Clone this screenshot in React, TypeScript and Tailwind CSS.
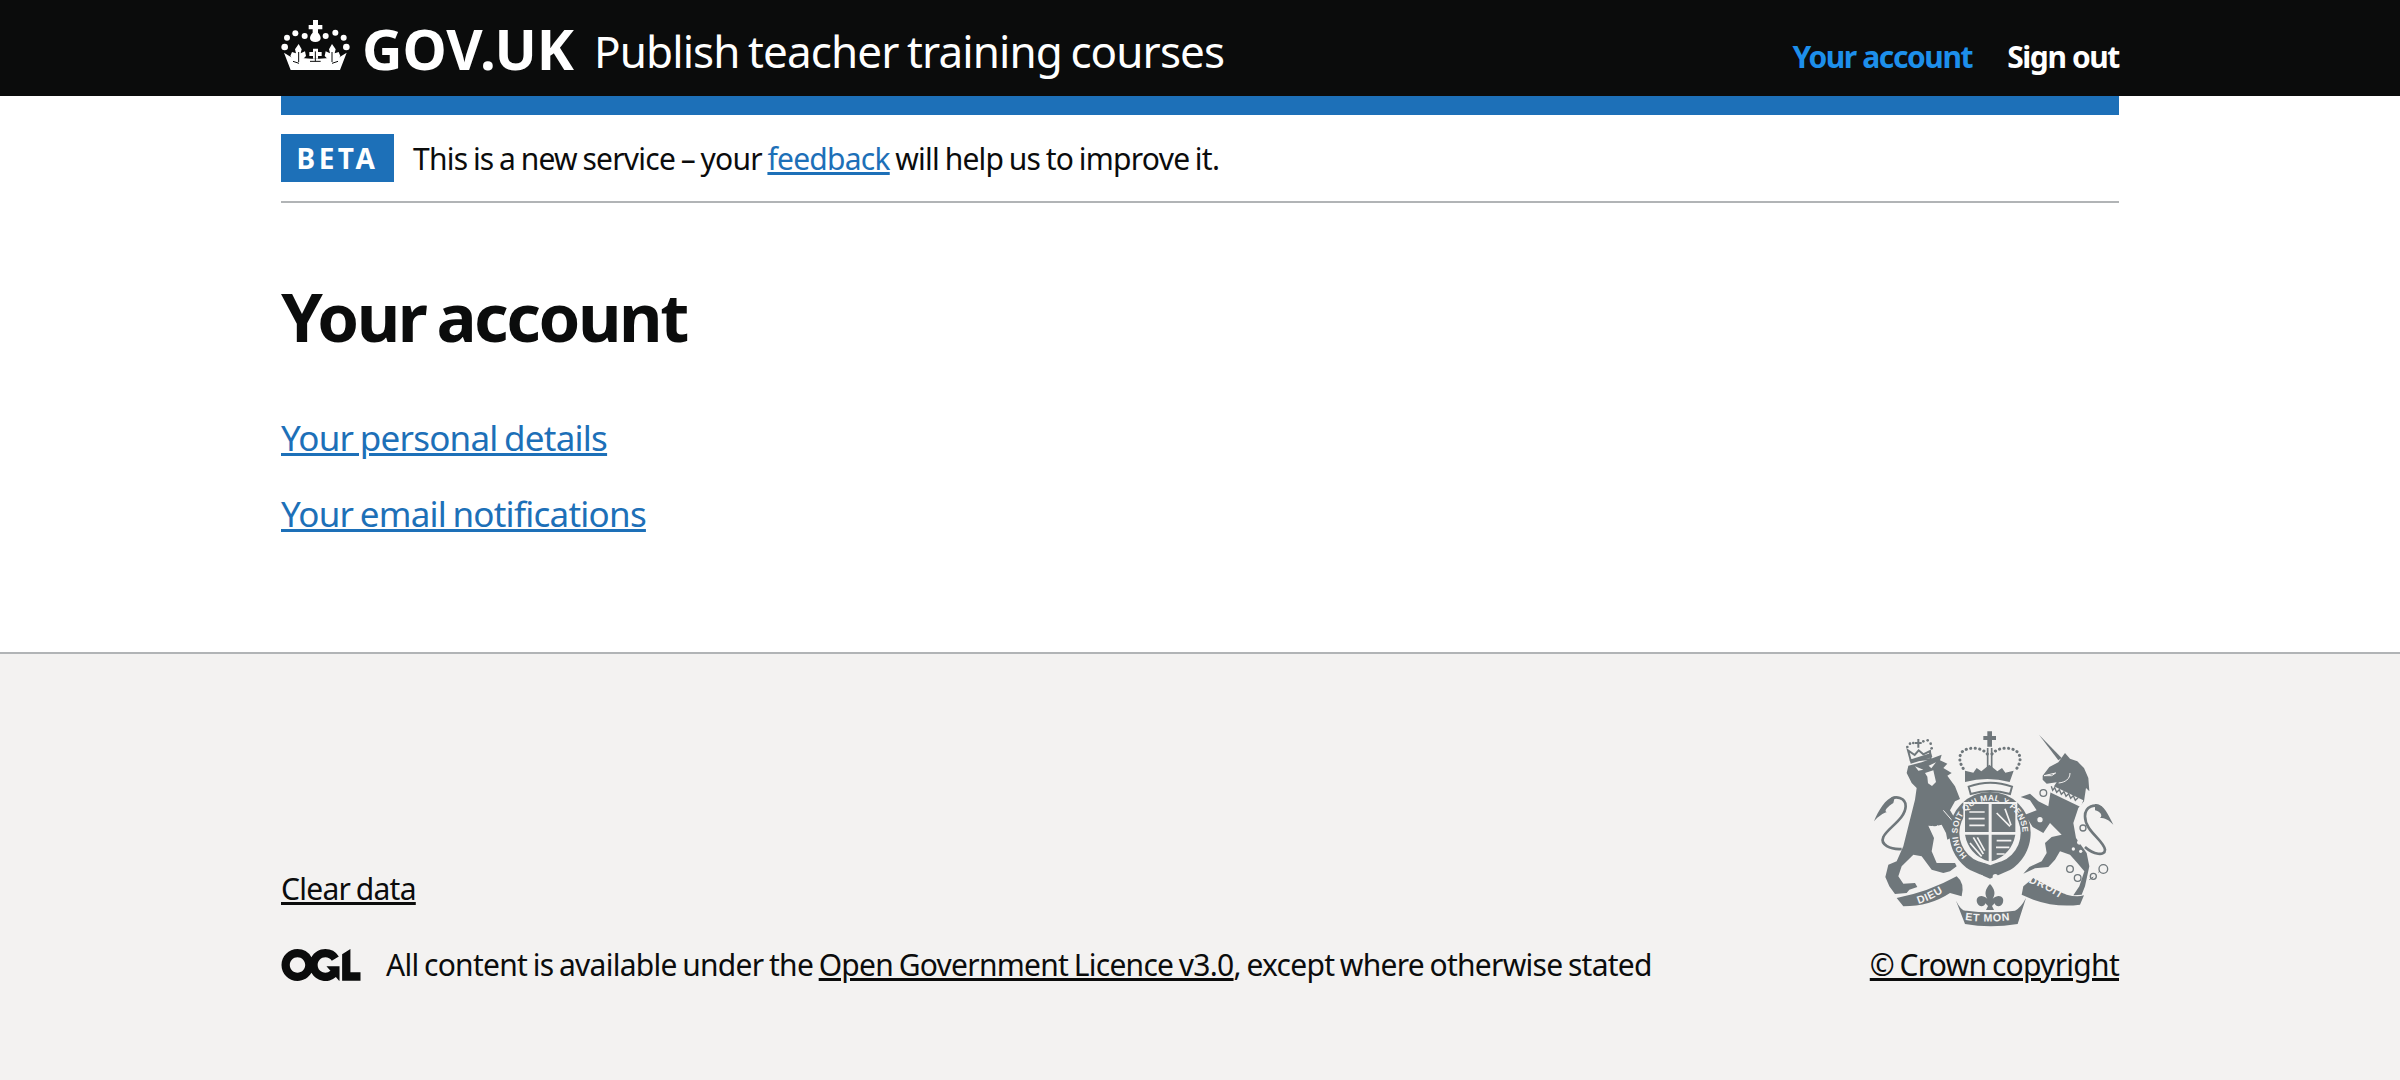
const font = { fontFamily: '"Noto Sans", Arial, sans-serif' }

function Crown() {
  const dots = [
    [20, 93, 10], [27, 65, 9], [52, 52, 9], [80, 60, 9], [143, 60, 9], [172, 50, 9], [197, 65, 9], [205, 93, 10],
  ]
  return (
    <svg width="76" height="60" viewBox="0 0 228 180" fill="#fff" className="shrink-0 -ml-[3px] -mt-[4px]">
      {dots.map(([x, y, r]) => (
        <circle key={`${x}-${y}`} cx={x} cy={y} r={r} />
      ))}
      <path d="M105 12h15v15h13v13h-13v10c6 6 8 12 8 17 0 7-7 11-16 11s-16-4-16-11c0-5 2-11 8-17V40H92V27h13z" />
      <path d="M62 84l9 16-3 12 13-6 3 14-8 8H43l-6-8 5-12 12 4-3-12z" />
      <path d="M162 84l-9 16 3 12-13-6-3 14 8 8h33l6-8-5-12-12 4 3-12z" />
      <path d="M105 98h15v10h11v12h-11v8h-15v-8H94v-12h11z" />
      <path d="M18 110l22 14 60 4h24l60-4 22-14-20 52H38z" />
      <path d="M62 108v30M112 106v30M162 108v30M45 136l18 6M180 136l-18 6M96 136h32" stroke="#0b0c0c" strokeWidth="3" fill="none" />
    </svg>
  )
}

function Ogl() {
  return (
    <svg width="80" height="32" viewBox="0 0 483.2 195.7" fill="#0b0c0c" className="shrink-0">
      <path d="M421.5 142.8V.1l-50.7 32.3v161.1h112.4v-50.7zm-122.3-9.6A47.12 47.12 0 0 1 221 97.8c0-26 21.1-47.1 47.1-47.1 16.7 0 31.4 8.7 39.7 21.8l42.7-27.2A97.63 97.63 0 0 0 268.1 0c-36.5 0-68.3 20.1-85.1 49.7A98 98 0 0 0 97.8 0C43.9 0 0 43.9 0 97.8s43.9 97.8 97.8 97.8c36.5 0 68.3-20.1 85.1-49.7a97.76 97.76 0 0 0 149.6 25.4l19.4 22.2h3v-87.8h-80l24.3 27.5zM97.8 145c-26 0-47.1-21.1-47.1-47.1s21.1-47.1 47.1-47.1 47.2 21 47.2 47S123.8 145 97.8 145" />
    </svg>
  )
}

// royal arms, drawn on a 840x660 grid
function Crest() {
  const c = '#6f777b'
  const bg = '#f3f2f1'
  const motto = { fontFamily: '"Liberation Sans", sans-serif', fontSize: 32, fontWeight: 700, fill: bg, letterSpacing: 2, wordSpacing: 0 }
  return (
    <svg width="280" height="220" viewBox="0 0 840 660" fill={c} className="-mr-[11px]">
      <defs>
        <path id="garterRing" d="M351.4 413.6 A97 97 0 1 1 488.6 413.6" />
        <path id="ribbonLeft" d="M205 558 Q260 540 300 508" />
        <path id="ribbonMid" d="M345 606 Q420 616 500 604" />
        <path id="ribbonRight" d="M535 494 Q590 510 650 556" />
      </defs>

      {/* lion */}
      <g transform="translate(30 15)">
        <path d="M145 128L185 118L245 95L240 112L262 122L250 135L275 150L262 158L285 190L300 228L285 235L270 262L305 320L290 335L262 350L258 330L245 305L225 310L205 308L222 345L215 385L230 420L285 420L290 430L270 445L250 450L215 440L185 400L160 395L125 430L115 460L130 482L165 480L172 492L148 500L140 510L105 513L88 490L76 462L85 425L110 415L130 370L145 310L165 230L170 195L155 180L140 150Z" />
        <path d="M125 378C90 380 60 365 70 342C82 315 135 290 137 250C138 225 105 215 90 232" fill="none" stroke={c} strokeWidth="8" />
        <path d="M105 220C75 225 55 265 42 295C55 280 70 270 80 268C70 262 85 250 100 240Z" />
        <path d="M165 130l25 10-15 3zM228 118l-22 10 8 8z" fill={bg} />
        <path d="M195 150l25-8 8 35-12 12-12-8-2-20z" fill={bg} />
        <path d="M250 262l50 58" stroke={bg} strokeWidth="3" fill="none" />
        <path d="M208 312l10-4 8 14 6-16 10 12 8 18-8 14-14 0-10-24z" fill={bg} />
        {/* lion crown */}
        <path d="M152 112l-8-30 20 14 12-14 14 12 20-10 2 24z" fill="none" stroke={c} strokeWidth="6" />
        <path d="M152 122l-3-12 64-20 4 12z" />
        <path d="M175 48v26M165 60h20" stroke={c} strokeWidth="6" />
        {[[142, 72], [150, 62], [160, 60], [190, 55], [203, 52], [212, 62], [215, 76]].map(([x, y]) => (
          <circle key={x} cx={x} cy={y} r="4" />
        ))}
      </g>

      {/* unicorn */}
      <g transform="translate(420 15)">
        <path d="M147 35L215 105L205 112Z" />
        <path d="M158 158L178 132L205 118L225 90L240 107L262 115L282 135L295 165L298 205L288 195L282 235L265 255L250 300L258 345L290 390L298 430L285 490L275 515L250 517L268 490L283 445L262 420L240 395L210 385L195 410L175 432L135 436L100 452L118 432L155 415L170 390L165 360L185 342L215 335L180 300L160 330L128 312L105 275L140 262L120 232L92 222L120 212L145 235L175 250L182 205L200 178L170 182L158 170Z" />
        <path d="M162 158l35-8-12 8zM240 150c0 18-14 28-34 30" stroke={bg} strokeWidth="3" fill="none" />
        <path d="M182 185L280 232L272 252L180 208Z" fill={bg} />
        <path d="M184 190l4 12 6-8 6 14 8-8 6 14 8-8 6 14 8-8 6 14 8-8 6 14 8-8" stroke={c} strokeWidth="4" fill="none" />
        <path d="M285 372C310 395 345 400 345 380C340 350 285 325 285 280C285 250 315 240 335 255" fill="none" stroke={c} strokeWidth="8" />
        <path d="M315 243C340 240 355 275 370 305C355 290 345 285 330 285C340 278 330 265 315 262Z" />
        <circle cx="279" cy="315" r="9" fill={bg} stroke={c} strokeWidth="4" />
        <circle cx="150" cy="290" r="10" fill={bg} stroke={c} strokeWidth="4" />
        {[[268, 358, 7], [250, 378, 5], [272, 385, 5]].map(([x, y, r]) => (
          <circle key={x} cx={x} cy={y} r={r} fill={bg} />
        ))}
        {[[160, 210, 10], [240, 438, 10], [263, 465, 10], [310, 460, 9], [340, 438, 13]].map(([x, y, r]) => (
          <circle key={x} cx={x} cy={y} r={r} fill="none" stroke={c} strokeWidth="4" />
        ))}
        <path d="M298 470l12-8M325 448l5-4" stroke={c} strokeWidth="3" />
      </g>

      {/* crown */}
      <path d="M412 40h14v14h12v12h-12v20h-14V66h-12V54h12z" />
      <path d="M413 90v62M425 90v62" stroke={c} strokeWidth="5" />
      <path d="M412 108c-18-22-60-22-76-6-12 16-6 34 4 50M426 108c18-22 60-22 76-6 14 16 8 34-2 50" fill="none" stroke={c} strokeWidth="9" strokeLinecap="round" strokeDasharray="0.5 13" />
      <path d="M345 158l25 6 10-14 14 10 24-20 24 20 14-10 10 14 25-6-12 34q-67-18-134 0z" />
      <path d="M356 206q65-24 130 0l-6 22q-60-18-118 0z" fill={bg} stroke={c} strokeWidth="6" />

      {/* garter and shield */}
      <path d="M420 222a122 122 0 0 1 122 122c0 50-28 92-62 112l-60 26-60-26c-34-20-62-62-62-112a122 122 0 0 1 122-122z" />
      <circle cx="420" cy="345" r="92" fill={bg} />
      <path d="M340 252h162v102q-6 60-81 88-75-28-81-88z" fill={bg} />
      <path d="M345 258h71v84h-71zM425 258h71v84h-71zM345 350h71v80q-60-20-71-80zM425 350h71q-11 60-71 80z" />
      <path d="M358 282h46M356 302h48M358 322h46M440 285l40 40M465 272l18 50M370 358l30 50M360 375l35 40M382 358l22 40M440 368h44M438 388h40M440 408h24" stroke={bg} strokeWidth="5" fill="none" />
      <circle cx="392" cy="478" r="8" fill={bg} />
      <circle cx="436" cy="476" r="8" fill={bg} />
      <text fontFamily='"Liberation Sans", sans-serif' fontSize="25" fontWeight="700" fill={bg} letterSpacing="1" wordSpacing="0">
        <textPath href="#garterRing">HONI SOIT QUI MAL Y PENSE</textPath>
      </text>

      {/* fleur and motto ribbon */}
      <path d="M420 498c14 15 18 30 8 44 18-16 38-6 30 14-6 14-22 10-24 0l-8 8 6 12h-24l6-12-8-8c-2 10-18 14-24 0-8-20 12-30 30-14-10-14-6-29 8-44z" />
      <path d="M140 540Q235 522 320 475Q345 495 335 535L300 525Q240 565 160 565Z" />
      <path d="M318 548Q335 582 350 578Q420 588 495 578Q512 570 528 540L503 618Q420 632 345 618Z" />
      <path d="M520 505L550 480Q600 510 650 530Q680 538 702 532L690 560Q620 570 550 545L515 530Z" />
      <text {...motto}>
        <textPath href="#ribbonLeft">DIEU</textPath>
      </text>
      <text {...motto}>
        <textPath href="#ribbonMid">ET MON</textPath>
      </text>
      <text {...motto}>
        <textPath href="#ribbonRight">DROIT</textPath>
      </text>
    </svg>
  )
}

export default function App() {
  return (
    <div style={font} className="min-h-[1080px] flex flex-col bg-white text-[#0b0c0c]">
      <header className="h-[96px] bg-[#0b0c0c] shrink-0">
        <div className="w-[1838px] h-full mx-auto flex items-center justify-between">
          <div className="flex items-center">
            <Crown />
            <span className="ml-[8px] text-[56px] font-bold text-white leading-none">GOV.UK</span>
            <span className="ml-[20px] pt-[6px] text-[44px] text-white leading-none tracking-[-0.9px] [word-spacing:-2px]">Publish teacher training courses</span>
          </div>
          <nav className="flex gap-[35px] text-[30px] font-bold pt-[16px] tracking-[-1.4px] [word-spacing:0px]">
            <a className="text-[#1d8feb]">Your account</a>
            <a className="text-white">Sign out</a>
          </nav>
        </div>
      </header>

      <main className="w-[1838px] mx-auto shrink-0">
        <div className="h-[19px] bg-[#1d70b8]" />
        <div className="h-[88px] flex items-center border-b-2 border-[#b1b4b6]">
          <strong className="w-[113px] h-[48px] flex items-center justify-center bg-[#1d70b8] text-white text-[28px] font-bold tracking-[3.5px]">BETA</strong>
          <p className="ml-[19px] text-[30px] tracking-[-0.75px] [word-spacing:-1.5px]">
            This is a new service – your <a className="text-[#1d70b8] underline">feedback</a> will help us to improve it.
          </p>
        </div>
        <h1 className="mt-[68px] text-[67px] leading-[90px] font-bold tracking-[-2.4px] [word-spacing:-4px]">Your account</h1>
        <ul className="mt-[52px] text-[35px] leading-[50px] text-[#1d70b8] underline flex flex-col gap-[26px] tracking-[-0.75px] [word-spacing:-2px]">
          <li>Your personal details</li>
          <li>Your email notifications</li>
        </ul>
      </main>

      <footer className="mt-[113px] flex-1 bg-[#f3f2f1] border-t-2 border-[#b1b4b6]">
        <div className="w-[1838px] mx-auto pt-[64px] flex justify-between items-end text-[30px] tracking-[-0.73px] [word-spacing:-1.5px]">
          <div>
            <a className="underline">Clear data</a>
            <div className="mt-[31px] flex items-center">
              <Ogl />
              <span className="ml-[25px]">
                All content is available under the <a className="underline">Open Government Licence v3.0</a>, except where otherwise stated
              </span>
            </div>
          </div>
          <div className="flex flex-col items-end">
            <Crest />
            <a className="underline mt-[4px]">© Crown copyright</a>
          </div>
        </div>
      </footer>
    </div>
  )
}
